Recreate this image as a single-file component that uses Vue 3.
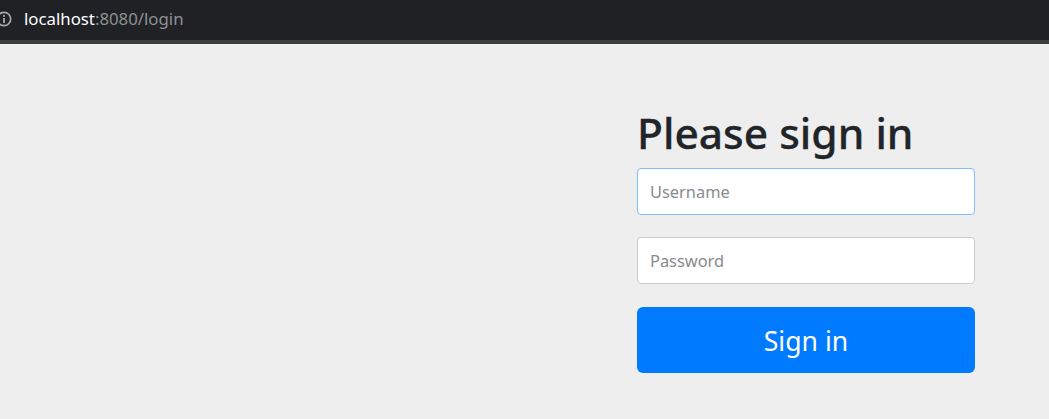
<template>
  <div class="page">
    <div class="addressbar">
      <svg class="info-icon" width="16" height="16" viewBox="0 0 16 16">
        <circle cx="4" cy="8" r="6.7" fill="none" stroke="#a6a9ad" stroke-width="1.7" />
        <rect x="3.1" y="4" width="1.8" height="1.8" fill="#a6a9ad" />
        <rect x="3.1" y="7" width="1.8" height="5" fill="#a6a9ad" />
      </svg>
      <span class="url"><span class="host">localhost</span>:8080/login</span>
    </div>
    <div class="content">
      <form class="signin" @submit.prevent>
        <h2 class="heading">Please sign in</h2>
        <input class="field focused" type="text" placeholder="Username" />
        <input class="field" type="password" placeholder="Password" />
        <button class="submit" type="submit">Sign in</button>
      </form>
    </div>
  </div>
</template>

<script setup>
</script>

<style scoped>
.page {
  height: 419px;
  display: flex;
  flex-direction: column;
  background: #eeeeee;
  font-family: "Noto Sans", "Open Sans", sans-serif;
  overflow: hidden;
}

.addressbar {
  height: 40px;
  box-sizing: content-box;
  display: flex;
  align-items: center;
  gap: 8px;
  background: #202124;
  border-bottom: 4px solid #3c3d3f;
}

.info-icon {
  flex: none;
  margin-top: -3px;
}

.url {
  font-size: 16.8px;
  color: #8e9195;
  margin-top: -3px;
}

.host {
  color: #ffffff;
}

.content {
  display: flex;
  justify-content: flex-end;
  padding-right: 74px;
}

.signin {
  width: 338px;
  display: flex;
  flex-direction: column;
  padding-top: 59px;
}

.heading {
  margin: 0 0 5px;
  font-size: 42.5px;
  line-height: 60px;
  font-weight: 500;
  color: #212529;
  white-space: nowrap;
  -webkit-text-stroke: 0.3px #212529;
}

.field {
  height: 47px;
  box-sizing: border-box;
  margin-bottom: 22px;
  padding: 0 12px;
  border: 1px solid #cccccc;
  border-radius: 4px;
  background: #ffffff;
  font-family: inherit;
  font-size: 16.4px;
  outline: none;
}

.field::placeholder {
  color: #888b8e;
  opacity: 1;
}

.focused {
  border-color: #80bdff;
}

.submit {
  height: 66px;
  margin-top: 1px;
  padding-top: 2px;
  border: none;
  border-radius: 6px;
  background: #007bff;
  color: #ffffff;
  font-family: inherit;
  font-size: 26.6px;
}
</style>
